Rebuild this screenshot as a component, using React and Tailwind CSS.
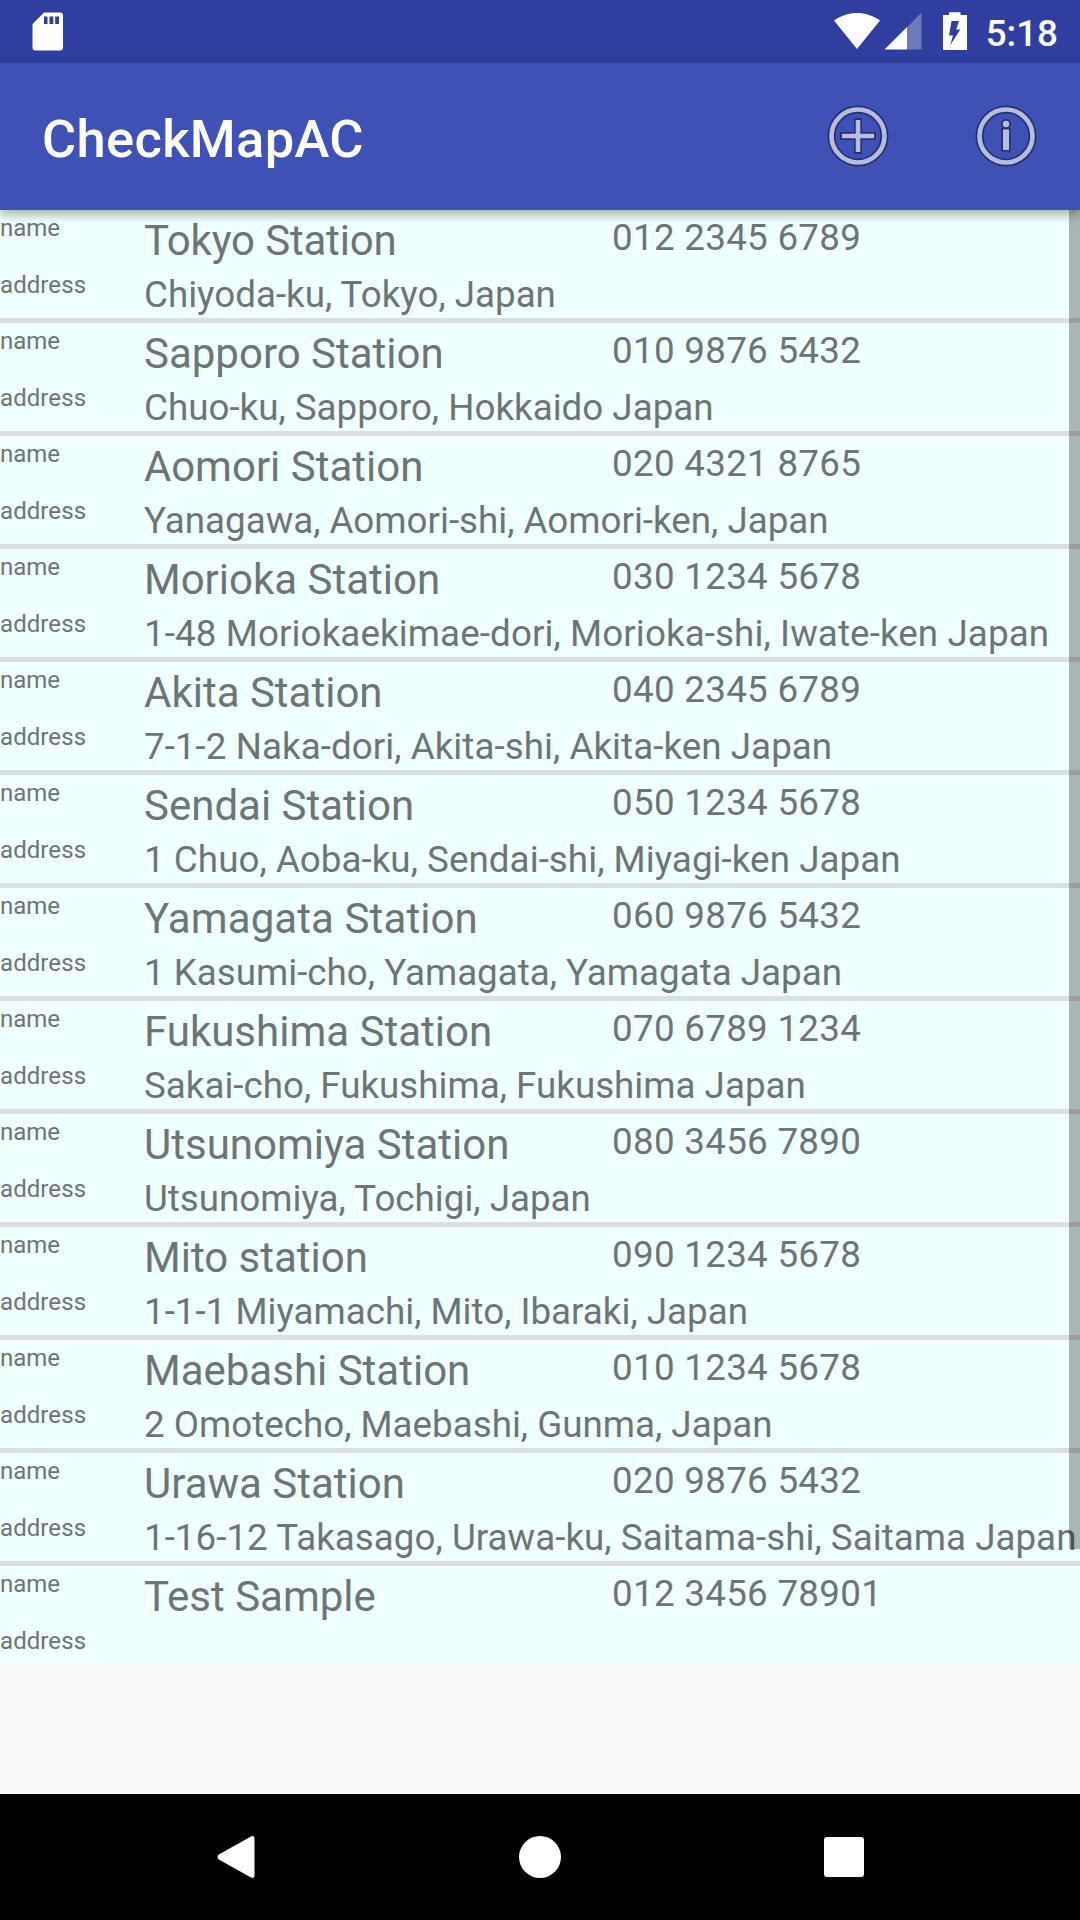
const stations = [
  { name: "Tokyo Station", phone: "012 2345 6789", address: "Chiyoda-ku, Tokyo, Japan", nameClass: "tracking-[-0.18px]" },
  { name: "Sapporo Station", phone: "010 9876 5432", address: "Chuo-ku, Sapporo, Hokkaido Japan" },
  { name: "Aomori Station", phone: "020 4321 8765", address: "Yanagawa, Aomori-shi, Aomori-ken, Japan" },
  {
    name: "Morioka Station",
    phone: "030 1234 5678",
    address: "1-48 Moriokaekimae-dori, Morioka-shi, Iwate-ken Japan",
    addressClass: "tracking-[0.1px]",
  },
  { name: "Akita Station", phone: "040 2345 6789", address: "7-1-2 Naka-dori, Akita-shi, Akita-ken Japan", addressClass: "tracking-[0.05px]" },
  { name: "Sendai Station", phone: "050 1234 5678", address: "1 Chuo, Aoba-ku, Sendai-shi, Miyagi-ken Japan", addressClass: "tracking-[0.05px]" },
  { name: "Yamagata Station", phone: "060 9876 5432", address: "1 Kasumi-cho, Yamagata, Yamagata Japan", nameClass: "tracking-[0.1px]" },
  { name: "Fukushima Station", phone: "070 6789 1234", address: "Sakai-cho, Fukushima, Fukushima Japan" },
  { name: "Utsunomiya Station", phone: "080 3456 7890", address: "Utsunomiya, Tochigi, Japan" },
  { name: "Mito station", phone: "090 1234 5678", address: "1-1-1 Miyamachi, Mito, Ibaraki, Japan" },
  { name: "Maebashi Station", phone: "010 1234 5678", address: "2 Omotecho, Maebashi, Gunma, Japan" },
  {
    name: "Urawa Station",
    phone: "020 9876 5432",
    address: "1-16-12 Takasago, Urawa-ku, Saitama-shi, Saitama Japan",
    addressClass: "tracking-[0.03px]",
  },
  { name: "Test Sample", phone: "012 3456 78901", address: "" },
];

const StatusBar = () => (
  <div className="h-[63px] bg-[#303f9f] flex items-start justify-between pl-8 pr-[22px] text-white">
    <svg width="32" height="63" viewBox="0 0 32 63">
      <path
        fillRule="evenodd"
        fill="currentColor"
        d="M12 12.5H28Q31 12.5 31 15.5V47.5Q31 50.5 28 50.5H3.5Q.5 50.5 .5 47.5V24ZM12 16.5V24H15.5V16.5ZM17.5 16.5V24H21.3V16.5ZM23.2 16.5V24H27V16.5Z"
      />
    </svg>

    <div className="flex items-start">
      {/* Wifi, signal, battery */}
      <svg width="134" height="63" viewBox="834 0 134 63">
        <path fill="currentColor" d="M857 49L834 20.5C841 15.500 849 13 857 13S873 15.500 880 20.500Z" />
        <path fill="currentColor" opacity="0.3" d="M907 27.2L921.5 12.5V49.5H907Z" />
        <path fill="currentColor" d="M884.5 49.5L907 27V49.5Z" />
        <path
          fillRule="evenodd"
          fill="currentColor"
          d="M949 12.3H960.5V15H967V50H943V15H949ZM951.5 21L949 35.5H953L950.2 45.3L960.3 29.5H956.2L959 21Z"
        />
      </svg>
      <span className="ml-[18px] mt-3 text-[36.75px] leading-[43px] font-medium">
        5:18
      </span>
    </div>
  </div>
);

const AppBar = () => (
  <div className="relative z-10 h-[147px] bg-[#3f51b5] flex items-center justify-between px-[42px] shadow-[0_5px_10px_rgba(0,0,0,0.3)]">
    <h1 className="text-[52.5px] leading-[62px] tracking-[0.3px] font-medium text-white pt-1">
      CheckMapAC
    </h1>
    <div className="flex gap-[84px] pb-px">
      <svg width="64" height="64" viewBox="-32 -32 64 64" fill="none">
        <g stroke="#26326f">
          <circle r="26.5" strokeWidth="8" />
          <path d="M0 -18V18M-18 0H18" strokeWidth="8" />
        </g>
        <g stroke="#b6bde1">
          <circle r="26.5" strokeWidth="4.6" />
          <path d="M0 -16V16M-16 0H16" strokeWidth="4.6" />
        </g>
      </svg>
      <svg width="64" height="64" viewBox="-32 -32 64 64" fill="none">
        <g stroke="#26326f">
          <circle r="26.5" strokeWidth="8" />
          <path d="M0 -8V15.5" strokeWidth="9.5" />
          <circle cy="-12" r="3" strokeWidth="4" />
        </g>
        <circle r="26.5" stroke="#b6bde1" strokeWidth="4.6" />
        <path d="M0 -6.5V14" stroke="#b6bde1" strokeWidth="6" />
        <circle cy="-12" r="3.2" fill="#b6bde1" />
      </svg>
    </div>
  </div>
);

const StationRow = ({ station }) => (
  <li className="h-[113px] last:h-[98px] border-b-[5px] last:border-b-0 border-[#dcdfdf] bg-[#f0ffff] flex whitespace-nowrap">
    <div className="w-36 shrink-0 text-[24px] leading-[28px]">
      <div className="h-[57px] pt-1">name</div>
      <div className="pt-1 tracking-[0.08px]">address</div>
    </div>
    <div>
      <div className="flex h-[58px]">
        <div className={`w-[468px] pt-[6px] text-[42px] leading-[49px] ${station.nameClass || ""}`}>
          {station.name}
        </div>
        <div className="pt-[6px] text-[36.75px] leading-[43px] tracking-[0.29px]">
          {station.phone}
        </div>
      </div>
      <div className={`pt-[5px] text-[36.75px] leading-[43px] ${station.addressClass || ""}`}>
        {station.address}
      </div>
    </div>
  </li>
);

const NavBar = () => (
  <div className="h-[126px] bg-black flex items-center justify-between pl-[217px] pr-[216px] text-white">
    <svg width="38" height="42" viewBox="0 0 38 42" fill="currentColor">
      <path d="M34 .5Q37.5 -1 37.5 3V39Q37.5 43 34 41.5L1.8 23.5Q-.8 21 1.8 18.5Z" />
    </svg>
    <div className="size-[42px] rounded-full bg-white" />
    <div className="size-10 rounded-[3px] bg-white" />
  </div>
);

const App = () => {
  return (
    <div className="w-[1080px] h-[1920px] flex flex-col overflow-hidden bg-[#fafafa] font-['Roboto',sans-serif]">
      <StatusBar />
      <AppBar />
      <div className="relative flex-1 text-[#6c7575]">
        <ul>
          {stations.map((station) => (
            <StationRow key={station.name} station={station} />
          ))}
        </ul>
        {/* Scrollbar */}
        <div className="absolute right-0 top-0 w-[11px] h-[1339px] bg-black/29" />
      </div>
      <NavBar />
    </div>
  );
};

export default App;
